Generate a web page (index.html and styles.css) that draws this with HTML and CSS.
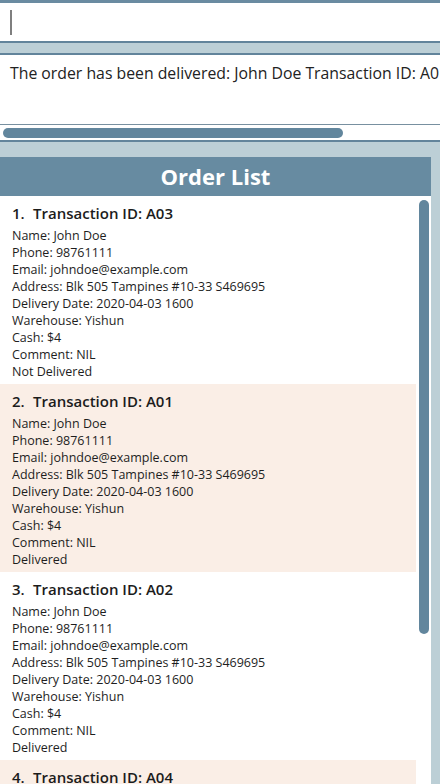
FILE: index.html
```html
<!DOCTYPE html>
<html>
<head>
<meta charset="utf-8">
<link rel="stylesheet" href="styles.css">
</head>
<body>
<div class="app">
  <div class="command"><span class="caret"></span></div>
  <div class="band small"></div>
  <div class="result">
    <div class="result-text">The order has been delivered: John Doe Transaction ID: A01 Name: John Doe Phone: 98761111</div>
    <div class="hscroll"><div class="hthumb"></div></div>
  </div>
  <div class="panel">
    <div class="list-wrap">
      <div class="list-header">Order List</div>
      <div class="list-body">
        <div class="items">
          <div class="item">
            <div class="title"><span class="idx">1.</span>Transaction ID: A03</div>
            <div class="line">Name: John Doe</div>
            <div class="line">Phone: 98761111</div>
            <div class="line">Email: johndoe@example.com</div>
            <div class="line">Address: Blk 505 Tampines #10-33 S469695</div>
            <div class="line">Delivery Date: 2020-04-03 1600</div>
            <div class="line">Warehouse: Yishun</div>
            <div class="line">Cash: $4</div>
            <div class="line">Comment: NIL</div>
            <div class="line">Not Delivered</div>
          </div>
          <div class="item alt">
            <div class="title"><span class="idx">2.</span>Transaction ID: A01</div>
            <div class="line">Name: John Doe</div>
            <div class="line">Phone: 98761111</div>
            <div class="line">Email: johndoe@example.com</div>
            <div class="line">Address: Blk 505 Tampines #10-33 S469695</div>
            <div class="line">Delivery Date: 2020-04-03 1600</div>
            <div class="line">Warehouse: Yishun</div>
            <div class="line">Cash: $4</div>
            <div class="line">Comment: NIL</div>
            <div class="line">Delivered</div>
          </div>
          <div class="item">
            <div class="title"><span class="idx">3.</span>Transaction ID: A02</div>
            <div class="line">Name: John Doe</div>
            <div class="line">Phone: 98761111</div>
            <div class="line">Email: johndoe@example.com</div>
            <div class="line">Address: Blk 505 Tampines #10-33 S469695</div>
            <div class="line">Delivery Date: 2020-04-03 1600</div>
            <div class="line">Warehouse: Yishun</div>
            <div class="line">Cash: $4</div>
            <div class="line">Comment: NIL</div>
            <div class="line">Delivered</div>
          </div>
          <div class="item alt">
            <div class="title"><span class="idx">4.</span>Transaction ID: A04</div>
            <div class="line">Name: John Doe</div>
            <div class="line">Phone: 98761111</div>
          </div>
        </div>
        <div class="vscroll"><div class="vthumb"></div></div>
      </div>
    </div>
  </div>
</div>
</body>
</html>
```
FILE: styles.css
```css
html, body {
  margin: 0;
  padding: 0;
}
body {
  width: 440px;
  height: 784px;
  overflow: hidden;
  background: #bccfd6;
  font-family: "Open Sans", "Noto Sans", sans-serif;
  color: #1a1a1a;
}
.app {
  display: flex;
  flex-direction: column;
  height: 784px;
}
.command {
  height: 38px;
  background: #ffffff;
  border-top: 3px solid #6a8ba1;
  border-bottom: 2px solid #62849b;
  display: flex;
  align-items: center;
  padding-left: 10px;
}
.caret {
  width: 2px;
  height: 25px;
  background: #7f7f7f;
}
.band.small {
  height: 10px;
}
.result {
  background: #ffffff;
  border-top: 2px solid #62849b;
  border-bottom: 2px solid #62849b;
  display: flex;
  flex-direction: column;
}
.result-text {
  height: 70px;
  box-sizing: border-box;
  padding: 6px 0 0 10px;
  font-size: 15.8px;
  line-height: 24px;
  white-space: nowrap;
  overflow: hidden;
  color: #222;
  border-bottom: 1px solid #7890a0;
}
.hscroll {
  height: 15px;
  display: flex;
  align-items: center;
  padding-left: 3px;
}
.hthumb {
  width: 340px;
  height: 10px;
  border-radius: 5px;
  background: #62869d;
}
.panel {
  flex: 1;
  min-height: 0;
  padding: 15px 9px 0 0;
  display: flex;
}
.list-wrap {
  flex: 1;
  display: flex;
  flex-direction: column;
  min-height: 0;
}
.list-header {
  height: 39px;
  background: #678ba1;
  color: #ffffff;
  font-weight: 700;
  font-size: 22px;
  line-height: 39px;
  text-align: center;
}
.list-body {
  flex: 1;
  min-height: 0;
  background: #ffffff;
  display: flex;
  overflow: hidden;
}
.items {
  width: 416px;
}
.item {
  height: 188px;
  box-sizing: border-box;
  padding: 6px 8px 0 12px;
  overflow: hidden;
}
.item.alt {
  background: #faeee6;
}
.title {
  font-size: 15px;
  font-weight: 600;
  line-height: 22px;
  margin-bottom: 3px;
  color: #1c1c1c;
}
.idx {
  display: inline-block;
  width: 21px;
}
.line {
  font-size: 12.5px;
  line-height: 17px;
  color: #1e1e1e;
}
.vscroll {
  width: 15px;
  display: flex;
  justify-content: center;
  padding-top: 4px;
}
.vthumb {
  width: 10px;
  height: 434px;
  border-radius: 5px;
  background: #62869d;
}
```
